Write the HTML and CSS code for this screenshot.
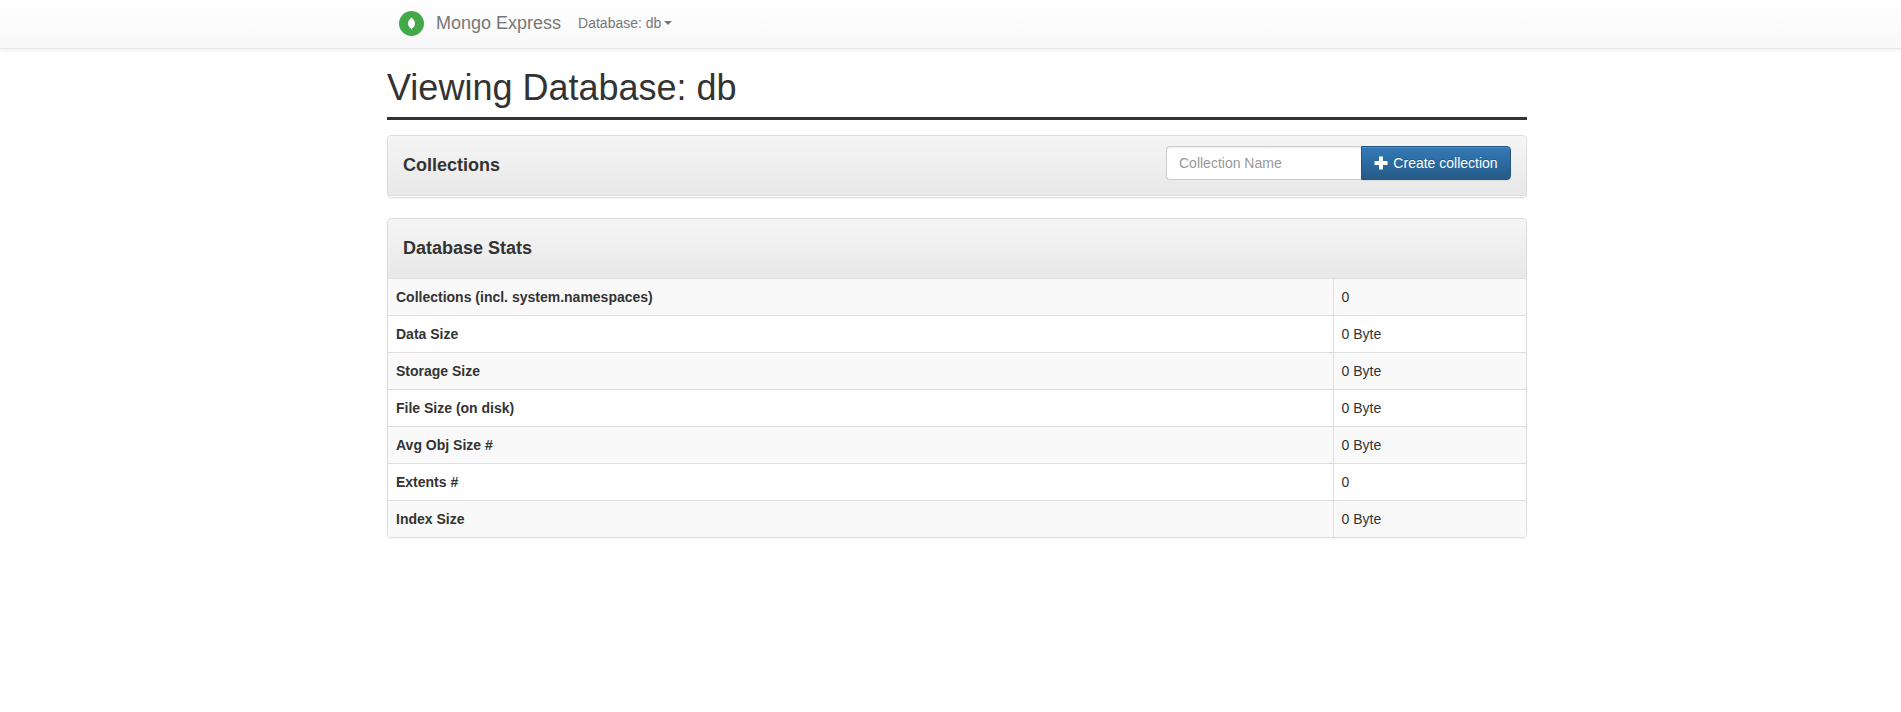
FILE: index.html
```html
<!DOCTYPE html>
<html lang="en">
<head>
<meta charset="utf-8">
<title>db - Mongo Express</title>
<link rel="stylesheet" href="styles.css">
</head>
<body>
<nav class="navbar">
  <div class="container navbar-inner">
    <a class="brand" href="#">
      <svg class="logo" viewBox="0 0 25 25" aria-hidden="true"><circle cx="12.5" cy="12.5" r="12.5" fill="#43a949"/><path d="M12.500 6.500C14.900 8.500 16 10.400 16 12.500C16 14.800 14.600 16.600 12.900 17.600V18.500H12.100V17.600C10.400 16.600 9 14.800 9 12.500C9 10.400 10.100 8.500 12.500 6.500Z" fill="#fff"/></svg>
      <span>Mongo Express</span>
    </a>
    <a class="nav-link" href="#">Database: db<span class="caret"></span></a>
  </div>
</nav>
<main class="page">
  <div class="container">
    <h1 class="page-title">Viewing Database: db</h1>
    <section class="panel panel-empty">
      <div class="panel-heading">
        <h2 class="panel-title">Collections</h2>
        <form class="create-form">
          <input class="text-input" type="text" placeholder="Collection Name" aria-label="Collection Name">
          <button class="button" type="submit"><svg class="plus" viewBox="0 0 14 14" aria-hidden="true"><path d="M5 .5h4v4.500h4.500v4H9v4.500H5V9H.5V5H5z" fill="#fff"/></svg>Create collection</button>
        </form>
      </div>
    </section>
    <section class="panel">
      <div class="panel-heading">
        <h2 class="panel-title">Database Stats</h2>
      </div>
      <table class="stats">
        <tbody>
          <tr><th scope="row">Collections (incl. system.namespaces)</th><td>0</td></tr>
          <tr><th scope="row">Data Size</th><td>0 Byte</td></tr>
          <tr><th scope="row">Storage Size</th><td>0 Byte</td></tr>
          <tr><th scope="row">File Size (on disk)</th><td>0 Byte</td></tr>
          <tr><th scope="row">Avg Obj Size #</th><td>0 Byte</td></tr>
          <tr><th scope="row">Extents #</th><td>0</td></tr>
          <tr><th scope="row">Index Size</th><td>0 Byte</td></tr>
        </tbody>
      </table>
    </section>
  </div>
</main>
</body>
</html>
```
FILE: styles.css
```css
* { box-sizing: border-box; }
body {
  margin: 0;
  background: #fff;
  color: #333;
  font: 14px/20px "Liberation Sans", Arial, sans-serif;
}
.navbar, .page { padding-left: 13px; }
.container { max-width: 1140px; margin: 0 auto; }
.navbar {
  background: linear-gradient(#fff, #f8f8f8);
  border-bottom: 1px solid #e7e7e7;
  box-shadow: 0 1px 5px rgba(0, 0, 0, .075);
}
.navbar-inner { display: flex; align-items: center; height: 48px; padding: 0 12px 2px; }
.brand, .nav-link {
  display: flex;
  align-items: center;
  color: #777;
  text-decoration: none;
  text-shadow: 0 1px 0 rgba(255, 255, 255, .25);
}
.brand { gap: 12px; font-size: 18px; margin-right: 17px; }
.logo { width: 25px; height: 25px; }
.caret {
  margin-left: 3px;
  border-top: 4px solid #777;
  border-left: 4px solid transparent;
  border-right: 4px solid transparent;
}
.page-title {
  margin: 19px 0 15px;
  padding-bottom: 9px;
  border-bottom: 3px solid #333;
  font-size: 36px;
  font-weight: 400;
  line-height: 40px;
}
.panel {
  margin-bottom: 20px;
  border: 1px solid #ddd;
  border-radius: 4px;
  box-shadow: 0 1px 2px rgba(0, 0, 0, .05);
  overflow: hidden;
}
.panel-heading {
  display: flex;
  justify-content: space-between;
  height: 60px;
  padding: 10px 15px;
  border-bottom: 1px solid #ddd;
  background: linear-gradient(#f5f5f5, #e8e8e8);
}
.panel-empty { padding-bottom: 1px; }
.panel-title { margin: 9px 0 0; font-size: 18px; font-weight: 700; line-height: 20px; }
.create-form { display: flex; }
.text-input, .button { height: 34px; font: inherit; padding: 6px 12px; }
.text-input {
  width: 195px;
  border: 1px solid #ccc;
  border-right: 0;
  border-radius: 4px 0 0 4px;
  background: #fff;
  color: #555;
  box-shadow: inset 0 1px 1px rgba(0, 0, 0, .075);
}
.text-input::placeholder { color: #999; }
.button {
  display: flex;
  align-items: center;
  justify-content: center;
  gap: 5px;
  min-width: 150px;
  border: 1px solid #245580;
  border-radius: 0 4px 4px 0;
  background: linear-gradient(#337ab7, #265a88);
  color: #fff;
  text-shadow: 0 -1px 0 rgba(0, 0, 0, .2);
  box-shadow: inset 0 1px 0 rgba(255, 255, 255, .15), 0 1px 1px rgba(0, 0, 0, .075);
}
.plus { width: 14px; height: 14px; }
.stats { width: 100%; border-collapse: collapse; }
.stats th, .stats td { padding: 8px; text-align: left; border-top: 1px solid #ddd; }
.stats tr:first-child > * { border-top: 0; }
.stats th { font-weight: 700; }
.stats td { width: 193px; border-left: 1px solid #ddd; }
.stats tr:nth-child(odd) { background: #f9f9f9; }
```
